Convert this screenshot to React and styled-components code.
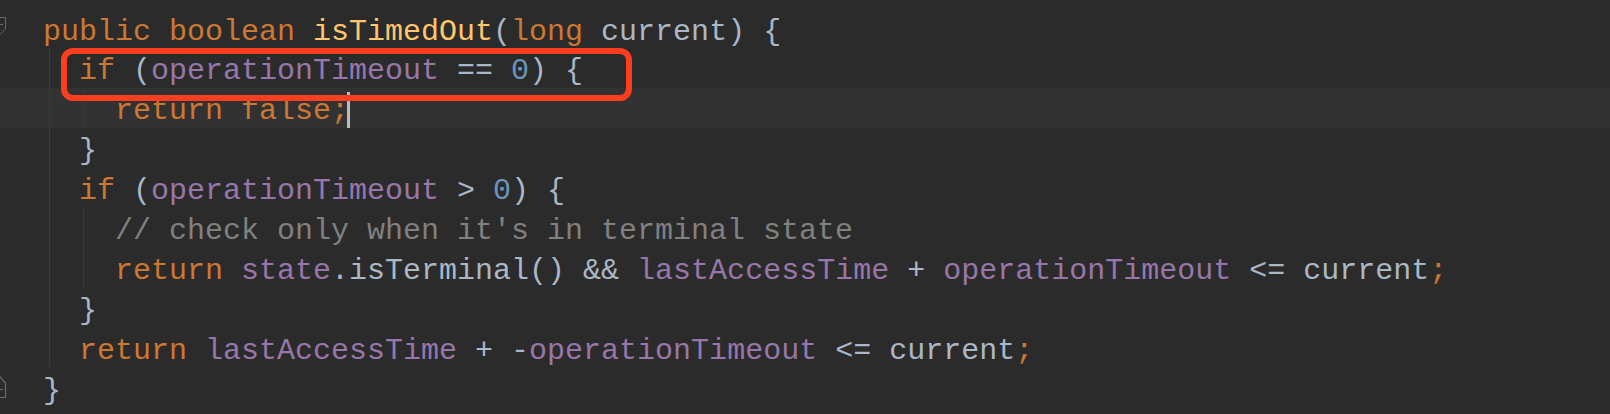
import React from "react";
import styled, { createGlobalStyle } from "styled-components";

const Global = createGlobalStyle`
  html, body {
    margin: 0;
    padding: 0;
    background: #2b2b2b;
  }
  body {
    width: 1610px;
    height: 414px;
    overflow: hidden;
  }
`;

const Editor = styled.div`
  position: relative;
  width: 1610px;
  height: 414px;
  box-sizing: border-box;
  padding-top: 8.2px;
  background: #2b2b2b;
  font-family: "Liberation Mono", "Courier New", monospace;
  font-size: 30px;
  overflow: hidden;
`;

const Line = styled.div`
  display: flex;
  height: 39.9px;
  background: ${(p) => (p.$current ? "#323232" : "transparent")};
`;

const Gutter = styled.div`
  width: 43px;
  flex: none;
  display: flex;
  align-items: flex-start;
`;

const FoldIcon = styled.svg`
  display: block;
  margin-top: ${(p) => p.$top}px;
`;

const Guide = styled.span`
  width: 36px;
  flex: none;
  background: linear-gradient(
    to right,
    transparent ${(p) => p.$x}px,
    #3a3a3a ${(p) => p.$x}px,
    #3a3a3a ${(p) => p.$x + 1}px,
    transparent ${(p) => p.$x + 1}px
  );
`;

const Code = styled.div`
  padding-top: 4.4px;
  line-height: 39.9px;
  white-space: pre;
  color: #a9b7c6;
`;

const COLORS = {
  k: "#cc7832",
  m: "#ffc66d",
  f: "#9876aa",
  n: "#6897bb",
  c: "#808080",
  d: "#a9b7c6",
};

const Tok = styled.span`
  color: ${(p) => COLORS[p.$t]};
`;

const Caret = styled.span`
  display: inline-block;
  width: 3px;
  height: 36px;
  margin-left: -2px;
  margin-top: -0.5px;
  vertical-align: top;
  background: #bbbbbb;
`;

const Highlight = styled.div`
  position: absolute;
  left: 61px;
  top: 48px;
  width: 571px;
  height: 53px;
  box-sizing: border-box;
  border: 6px solid #fa3e1f;
  border-radius: 12px;
  pointer-events: none;
`;

const FoldStart = () => (
  <FoldIcon $top={9} width="7" height="18" viewBox="7 0 7 18">
    <path
      d="M1.5 0.5 H12.5 V12 L7 17.5 L1.5 12 Z"
      fill="none"
      stroke="#6b6b6b"
      strokeWidth="1"
    />
    <path d="M4 7.5 H10" stroke="#6b6b6b" strokeWidth="1" />
  </FoldIcon>
);

const FoldEnd = () => (
  <FoldIcon $top={9} width="7" height="22" viewBox="7 0 7 22">
    <path
      d="M1.5 21.5 H12.5 V7 L7 0.8 L1.5 7 Z"
      fill="none"
      stroke="#6b6b6b"
      strokeWidth="1.2"
    />
    <path d="M4 13.5 H10" stroke="#6b6b6b" strokeWidth="1.2" />
  </FoldIcon>
);

const GUIDE_X = [6, 4];

const lines = [
  {
    indent: 0,
    fold: "start",
    toks: [
      ["k", "public boolean "],
      ["m", "isTimedOut"],
      ["d", "("],
      ["k", "long "],
      ["d", "current) {"],
    ],
  },
  {
    indent: 1,
    toks: [
      ["k", "if "],
      ["d", "("],
      ["f", "operationTimeout"],
      ["d", " == "],
      ["n", "0"],
      ["d", ") {"],
    ],
  },
  {
    indent: 2,
    current: true,
    caret: true,
    toks: [["k", "return false;"]],
  },
  { indent: 1, toks: [["d", "}"]] },
  {
    indent: 1,
    toks: [
      ["k", "if "],
      ["d", "("],
      ["f", "operationTimeout"],
      ["d", " > "],
      ["n", "0"],
      ["d", ") {"],
    ],
  },
  {
    indent: 2,
    toks: [["c", "// check only when it's in terminal state"]],
  },
  {
    indent: 2,
    toks: [
      ["k", "return "],
      ["f", "state"],
      ["d", ".isTerminal() && "],
      ["f", "lastAccessTime"],
      ["d", " + "],
      ["f", "operationTimeout"],
      ["d", " <= current"],
      ["k", ";"],
    ],
  },
  { indent: 1, toks: [["d", "}"]] },
  {
    indent: 1,
    toks: [
      ["k", "return "],
      ["f", "lastAccessTime"],
      ["d", " + -"],
      ["f", "operationTimeout"],
      ["d", " <= current"],
      ["k", ";"],
    ],
  },
  { indent: 0, fold: "end", toks: [["d", "}"]] },
];

export default function App() {
  return (
    <>
      <Global />
      <Editor>
        {lines.map((line, i) => (
          <Line key={i} $current={line.current}>
            <Gutter>
              {line.fold === "start" && <FoldStart />}
              {line.fold === "end" && <FoldEnd />}
            </Gutter>
            {Array.from({ length: line.indent }).map((_, g) => (
              <Guide key={g} $x={GUIDE_X[g]} />
            ))}
            <Code>
              {line.toks.map(([t, s], j) => (
                <Tok key={j} $t={t}>
                  {s}
                </Tok>
              ))}
              {line.caret && <Caret />}
            </Code>
          </Line>
        ))}
        <Highlight />
      </Editor>
    </>
  );
}
